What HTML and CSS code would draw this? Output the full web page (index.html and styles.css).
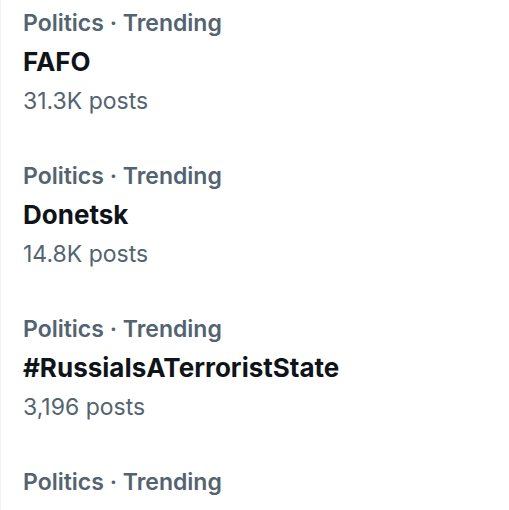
FILE: index.html
```html
<!DOCTYPE html>
<html lang="en">
<head>
    <meta charset="UTF-8">
    <meta name="viewport" content="width=device-width, initial-scale=1.0">
    <title>Trending</title>
    <link rel="stylesheet" href="styles.css">
</head>
<body>
    <div class="trends">
        <div class="trend">
            <div class="trend-meta">Politics · Trending</div>
            <div class="trend-name">FAFO</div>
            <div class="trend-count">31.3K posts</div>
        </div>
        <div class="trend">
            <div class="trend-meta">Politics · Trending</div>
            <div class="trend-name">Donetsk</div>
            <div class="trend-count">14.8K posts</div>
        </div>
        <div class="trend">
            <div class="trend-meta">Politics · Trending</div>
            <div class="trend-name">#RussiaIsATerroristState</div>
            <div class="trend-count">3,196 posts</div>
        </div>
        <div class="trend">
            <div class="trend-meta">Politics · Trending</div>
        </div>
    </div>
</body>
</html>
```

FILE: styles.css
```css
body {
    margin: 0;
    padding: 0;
    background: #fff;
    font-family: Inter, "Noto Sans", sans-serif;
    overflow: hidden;
}
.trends {
    border-left: 1px solid #eff3f4;
    height: 510px;
    overflow: hidden;
}
.trend {
    height: 153px;
    box-sizing: border-box;
    padding: 5px 22px 0 22px;
}
.trend-meta {
    color: #536471;
    font-size: 23px;
    font-weight: 600;
    line-height: 36px;
}
.trend-name {
    color: #0f1419;
    font-size: 26px;
    font-weight: 700;
    line-height: 42px;
}
.trend-count {
    color: #536471;
    font-size: 23px;
    line-height: 36px;
}
```
